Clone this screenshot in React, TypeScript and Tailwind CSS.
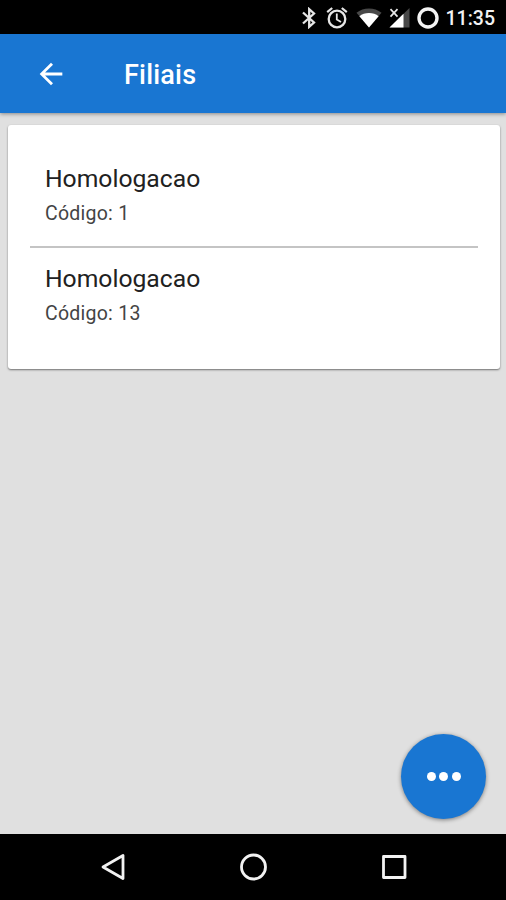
import React from 'react';
import { MdArrowBack } from 'react-icons/md';

const filiais = [
	{ nome: 'Homologacao', codigo: 1 },
	{ nome: 'Homologacao', codigo: 13 },
];

function StatusBar() {
	return (
		<div className="flex h-[34px] shrink-0 items-center justify-end bg-black pt-[2px] pr-[11px] text-[#f2f2f2]">
			{/* Bluetooth */}
			<svg className="mr-[9px] h-[22px] w-[16px] shrink-0" viewBox="0 0 16 22" fill="none" stroke="#e6e6e6" strokeWidth="2.3">
				<path d="M2 5.5l11 10-4.8 4.3V2.200l4.800 4.300-11 10"/>
			</svg>
			{/* Alarme */}
			<svg className="mr-[8px] size-[22px] shrink-0" viewBox="0 0 22 22" fill="none" stroke="#e6e6e6">
				<circle cx="11" cy="12" r="8.3" strokeWidth="2.3"/>
				<path d="M1.2 5.200l5-4.200M20.800 5.200l-5-4.200" strokeWidth="2.2"/>
				<path d="M10.800 6.500v6l4.200 2.600" strokeWidth="1.8"/>
			</svg>
			{/* Wi-Fi */}
			<svg className="mr-[7px] h-[20px] w-[26px] shrink-0" viewBox="0 0 26 20">
				<path d="M13 19.500L0.500 4.800C4 2 8.300 0.500 13 0.500s9 1.500 12.500 4.300z" fill="#484848"/>
				<path d="M13 19.500L3.400 8.200C6 6.200 9.300 5 13 5s7 1.200 9.600 3.200z" fill="#fff"/>
			</svg>
			{/* Sinal */}
			<svg className="mr-[7px] h-[20px] w-[21px] shrink-0" viewBox="0 0 21 20">
				<path d="M0.500 19.500L20.500 0v19.500z" fill="#484848"/>
				<path d="M0.500 19.500L14.500 5.800v13.700z" fill="#fff"/>
				<path d="M1.500 1.200l7 7.500M8.500 1.200l-7 7.500" stroke="#e8e8e8" strokeWidth="1.7"/>
			</svg>
			{/* Bateria */}
			<svg className="mr-[7px] size-[22px] shrink-0" viewBox="0 0 22 22">
				<circle cx="11" cy="11" r="9" fill="none" stroke="#f4f4f4" strokeWidth="3.4"/>
			</svg>
			<span className="pt-[2px] text-[19.5px] leading-none font-medium">11:35</span>
		</div>
	);
}

function Header({ title }: { title: string }) {
	return (
		<header className="z-10 flex h-[79px] shrink-0 items-center bg-[#1976d2] pl-[34px] text-white shadow-[0_1px_4px_rgba(0,0,0,0.4)]">
			<button type="button" aria-label="Voltar">
				<MdArrowBack className="size-[34px]"/>
			</button>
			<h1 className="ml-[56px] pt-[3px] text-[27px] leading-none font-medium tracking-[0.2px]">{title}</h1>
		</header>
	);
}

function NavBar() {
	return (
		<nav className="flex h-[66px] shrink-0 items-center justify-between bg-black pr-[98px] pl-[99px]">
			<svg className="size-[28px]" viewBox="0 0 28 28" fill="none" stroke="#f2f2f2" strokeWidth="2.8" strokeLinejoin="round">
				<path d="M24 2.500v23L4 14z"/>
			</svg>
			<svg className="size-[28px]" viewBox="0 0 28 28" fill="none" stroke="#f2f2f2" strokeWidth="2.8">
				<circle cx="13.5" cy="14" r="12"/>
			</svg>
			<svg className="size-[28px]" viewBox="0 0 28 28" fill="none" stroke="#f2f2f2" strokeWidth="2.8" strokeLinejoin="round">
				<path d="M3.500 3.500h21.500v21h-21.500z"/>
			</svg>
		</nav>
	);
}

export default function App() {
	return (
		<div className="relative flex h-[900px] w-[506px] flex-col overflow-hidden bg-[#e0e0e0] font-['Roboto',sans-serif]">
			<StatusBar/>
			<Header title="Filiais"/>
			<main className="flex-1 pt-[12px] pr-[6px] pl-[8px]">
				<ul className="h-[244px] rounded-[3px] bg-white px-[22px] pt-[23px] shadow-[0_1px_2px_rgba(0,0,0,0.5)]">
					{filiais.map((filial) => (
						<li key={filial.codigo} className="h-[100px] border-b-2 border-[#c4c4c4] pt-[16px] pl-[15px] last:border-b-0">
							<h2 className="text-[24.7px] leading-[30px] text-[#212121]">{filial.nome}</h2>
							<p className="mt-[7px] text-[19.5px] leading-[26px] tracking-[0.25px] text-[#444]">Código: {filial.codigo}</p>
						</li>
					))}
				</ul>
			</main>
			{/* Botão flutuante */}
			<button
				type="button"
				aria-label="Mais opções"
				className="absolute right-[20px] bottom-[81px] flex size-[85px] items-center justify-center gap-[3.5px] rounded-full bg-[#1976d2] shadow-[0_1px_4px_rgba(0,0,0,0.45)]"
			>
				<span className="size-[9px] rounded-full bg-white"/>
				<span className="size-[9px] rounded-full bg-white"/>
				<span className="size-[9px] rounded-full bg-white"/>
			</button>
			<NavBar/>
		</div>
	);
}
